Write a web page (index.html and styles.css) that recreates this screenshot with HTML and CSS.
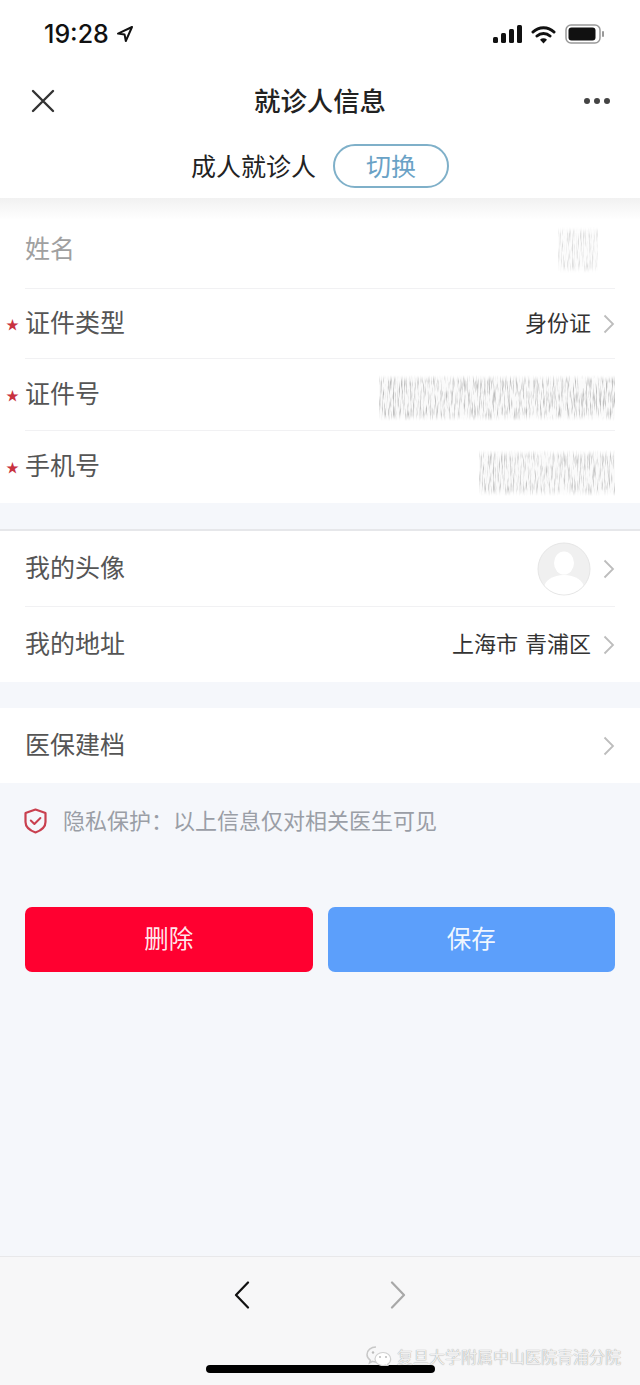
FILE: index.html
```html
<!DOCTYPE html>
<html lang="zh-CN">
<head>
  <meta charset="UTF-8">
  <meta name="viewport" content="width=device-width, initial-scale=1.0">
  <title>就诊人信息</title>
  <link rel="stylesheet" href="styles.css">
</head>
<body>
  <svg class="defs" width="0" height="0">
    <filter id="noise" x="0" y="0" width="1" height="1">
      <feTurbulence type="fractalNoise" baseFrequency="0.7 0.06" numOctaves="3" seed="7"/>
      <feColorMatrix values="0 0 0 0 .5  0 0 0 0 .5  0 0 0 0 .5  3 0 0 0 -1.350"/>
      <feComposite in2="SourceGraphic" operator="in"/>
      <feMerge><feMergeNode in="SourceGraphic"/><feMergeNode/></feMerge>
    </filter>
  </svg>
  <div class="page">
    <header class="top">
      <div class="status">
        <div class="status-time">
          <span>19:28</span>
          <svg width="18" height="18" viewBox="0 0 18 18"><path d="M16 2 2 8.600l6.600 1 1.200 6.400z" fill="none" stroke="#111" stroke-width="2" stroke-linejoin="round"/></svg>
        </div>
        <div class="status-icons">
          <svg width="29" height="20" viewBox="0 0 29 20"><rect x="0" y="13" width="5" height="6" rx="1.500" fill="#111"/><rect x="8" y="9" width="5" height="10" rx="1.500" fill="#111"/><rect x="16" y="5" width="5" height="14" rx="1.500" fill="#111"/><rect x="24" y="1" width="5" height="18" rx="1.500" fill="#111"/></svg>
          <svg width="25" height="19" viewBox="0 0 25 19"><path d="M2 7a15 15 0 0 1 21 0M6 11a9.500 9.500 0 0 1 13 0" fill="none" stroke="#111" stroke-width="3" stroke-linecap="round"/><path d="M12.500 18.500 9 14.700a5 5 0 0 1 7 0z" fill="#111"/></svg>
          <svg width="40" height="20" viewBox="0 0 40 20"><rect x="1" y="1" width="34" height="18" rx="5" fill="none" stroke="#999" stroke-width="1.500"/><rect x="3.500" y="3.500" width="27" height="13" rx="3" fill="#111"/><rect x="37" y="7" width="2" height="6" rx="1" fill="#999"/></svg>
        </div>
      </div>
      <nav class="nav">
        <svg class="nav-close" width="26" height="26" viewBox="0 0 26 26"><path d="M3 3l20 20M23 3 3 23" stroke="#333" stroke-width="2.400" stroke-linecap="round"/></svg>
        <h1 class="nav-title">就诊人信息</h1>
        <div class="nav-more"><i></i><i></i><i></i></div>
      </nav>
      <div class="patient-type">
        <span class="patient-text">成人就诊人</span>
        <button class="switch-button">切换</button>
      </div>
    </header>

    <section class="group group-first">
      <div class="row row-name">
        <span class="label label-off">姓名</span>
        <div class="mask mask-name"></div>
      </div>
      <div class="row row-type">
        <span class="star">★</span>
        <span class="label">证件类型</span>
        <span class="value">身份证</span>
        <svg class="chevron" width="12" height="20" viewBox="0 0 12 20"><path d="M1.500 1.500 10 10l-8.500 8.500" fill="none" stroke="#bdbdbd" stroke-width="1.800"/></svg>
      </div>
      <div class="row row-id">
        <span class="star">★</span>
        <span class="label">证件号</span>
        <div class="mask mask-id"></div>
      </div>
      <div class="row row-phone">
        <span class="star">★</span>
        <span class="label">手机号</span>
        <div class="mask mask-phone"></div>
      </div>
    </section>

    <section class="group group-second">
      <div class="row row-avatar">
        <span class="label">我的头像</span>
        <svg class="avatar" width="54" height="54" viewBox="0 0 54 54"><defs><clipPath id="avatar-clip"><circle cx="27" cy="27" r="25.500"/></clipPath></defs><circle cx="27" cy="27" r="26" fill="#f0f0f0" stroke="#e6e6e6"/><g clip-path="url(#avatar-clip)" fill="#fff"><ellipse cx="27" cy="21" rx="10" ry="11.500"/><ellipse cx="27" cy="46" rx="20" ry="13"/></g></svg>
        <svg class="chevron" width="12" height="20" viewBox="0 0 12 20"><path d="M1.500 1.500 10 10l-8.500 8.500" fill="none" stroke="#bdbdbd" stroke-width="1.800"/></svg>
      </div>
      <div class="row row-address">
        <span class="label">我的地址</span>
        <span class="value">上海市 青浦区</span>
        <svg class="chevron" width="12" height="20" viewBox="0 0 12 20"><path d="M1.500 1.500 10 10l-8.500 8.500" fill="none" stroke="#bdbdbd" stroke-width="1.800"/></svg>
      </div>
    </section>

    <section class="group group-third">
      <div class="row row-insurance">
        <span class="label">医保建档</span>
        <svg class="chevron chevron-end" width="12" height="20" viewBox="0 0 12 20"><path d="M1.500 1.500 10 10l-8.500 8.500" fill="none" stroke="#bdbdbd" stroke-width="1.800"/></svg>
      </div>
    </section>

    <div class="privacy">
      <svg width="23" height="26" viewBox="0 0 23 26"><path d="M11.500 1.500 21.500 5v9c0 5-4.500 8.500-10 10.500C6 22.500 1.500 19 1.500 14V5z" fill="none" stroke="#c9404f" stroke-width="2.200" stroke-linejoin="round"/><path d="M6.800 12.500l3.600 3.500 6-6" fill="none" stroke="#c9404f" stroke-width="2" stroke-linecap="round" stroke-linejoin="round"/></svg>
      <span class="privacy-text">隐私保护：以上信息仅对相关医生可见</span>
    </div>

    <div class="actions">
      <button class="action action-delete">删除</button>
      <button class="action action-save">保存</button>
    </div>

    <footer class="toolbar">
      <svg width="16" height="28" viewBox="0 0 16 28"><path d="M14 1.500 2 14l12 12.500" fill="none" stroke="#111" stroke-width="2.200" stroke-linecap="round" stroke-linejoin="round"/></svg>
      <svg width="16" height="28" viewBox="0 0 16 28"><path d="M2 1.500 14 14 2 26.500" fill="none" stroke="#a8a8a8" stroke-width="2.200" stroke-linecap="round" stroke-linejoin="round"/></svg>
      <div class="home-bar"></div>
      <div class="watermark">
        <svg width="26" height="20" viewBox="0 0 26 20"><path d="M10 1C5 1 1 4.300 1 8.500c0 2.400 1.300 4.400 3.400 5.800L3.500 17l3-1.600c1.100.3 2.300.5 3.500.5" fill="none" stroke="#c8c8c8" stroke-width="1.500"/><path d="M17 6.500c-4.400 0-8 2.900-8 6.500s3.600 6.500 8 6.500c1 0 1.900-.1 2.800-.4l2.500 1.300-.7-2.200c1.900-1.200 3.100-3 3.100-5.200 0-3.600-3.300-6.500-7.700-6.500z" fill="#fff" stroke="#d0d0d0" stroke-width="1.200"/><circle cx="7" cy="6.500" r="1.200" fill="#bbb"/><circle cx="14" cy="11" r="1" fill="#bbb"/><circle cx="20" cy="11" r="1" fill="#bbb"/></svg>
        <span>复旦大学附属中山医院青浦分院</span>
      </div>
    </footer>
  </div>
</body>
</html>
```

FILE: styles.css
```css
* {
  box-sizing: border-box;
}
body {
  margin: 0;
  font-family: "Noto Sans CJK SC", "Noto Sans", sans-serif;
  background: #f5f7fb;
}
.defs {
  position: absolute;
}
.page {
  position: relative;
  display: flex;
  flex-direction: column;
  height: 1385px;
  overflow: hidden;
}

/* top */
.top {
  height: 198px;
  background: #fff;
}
.status {
  display: flex;
  justify-content: space-between;
  align-items: center;
  height: 68px;
  padding: 0 35px 0 44px;
}
.status-time {
  display: flex;
  align-items: center;
  gap: 7px;
  font-family: Inter, sans-serif;
  font-size: 25px;
  font-weight: 500;
  color: #111;
}
.status-icons {
  display: flex;
  align-items: center;
  gap: 9px;
}
.nav {
  display: flex;
  justify-content: space-between;
  align-items: center;
  height: 66px;
  padding: 0 30px;
}
.nav-title {
  margin: 0 0 4px;
  font-size: 26.400px;
  font-weight: 500;
  color: #222;
}
.nav-more {
  display: flex;
  gap: 4px;
}
.nav-more i {
  width: 6px;
  height: 6px;
  border-radius: 50%;
  background: #444;
}
.patient-type {
  display: flex;
  justify-content: center;
  align-items: center;
  gap: 17px;
  height: 62px;
  padding-top: 2px;
  font-size: 25px;
  color: #222;
}
.patient-text {
  margin-bottom: 2px;
}
.switch-button {
  width: 116px;
  height: 44px;
  padding: 0 0 2px;
  border: 2px solid #7fb0c9;
  border-radius: 22px;
  background: #fff;
  font-family: inherit;
  font-size: 25px;
  color: #6aa2c6;
}

/* rows */
.group {
  background: #fff;
}
.group-first {
  background: linear-gradient(#f1f1f1, #fff 22px);
}
.group-second {
  margin-top: 26px;
  border-top: 2px solid #e6e7ea;
}
.group-third {
  margin-top: 26px;
}
.row {
  display: flex;
  align-items: center;
  margin: 0 25px;
  border-bottom: 1px solid #f1f1f3;
}
.row-name {
  height: 91px;
  padding-top: 14px;
}
.row-type {
  height: 70px;
}
.row-id {
  height: 72px;
}
.row-phone {
  height: 72px;
  border-bottom: 0;
}
.row-avatar {
  height: 76px;
}
.row-address {
  height: 75px;
  border-bottom: 0;
}
.row-insurance {
  height: 75px;
  border-bottom: 0;
}
.star {
  width: 19px;
  margin-left: -19px;
  font-size: 13px;
  line-height: 24px;
  color: #c8323f;
}
.label {
  margin-bottom: 6px;
  font-size: 25px;
  color: #555;
}
.label-off {
  color: #a0a0a0;
}
.value {
  margin-left: auto;
  margin-bottom: 6px;
  font-size: 22px;
  word-spacing: 2px;
  color: #333;
}
.chevron {
  margin-left: 12px;
  flex: none;
}
.chevron-end {
  margin-left: auto;
}
.avatar {
  margin-left: auto;
}

/* blurred values */
.mask {
  margin-left: auto;
  background: #fafafa;
  filter: url(#noise) blur(0.5px);
  -webkit-mask-image: linear-gradient(transparent, #000 14%, #000 86%, transparent);
  mask-image: linear-gradient(transparent, #000 14%, #000 86%, transparent);
}
.mask-name {
  width: 40px;
  height: 46px;
  margin-right: 17px;
  opacity: 0.5;
}
.mask-id {
  width: 236px;
  height: 46px;
  margin-top: 6px;
}
.mask-phone {
  width: 136px;
  height: 46px;
  margin-top: 12px;
  opacity: 0.85;
}

/* privacy */
.privacy {
  display: flex;
  align-items: center;
  gap: 16px;
  height: 76px;
  padding-left: 24px;
  font-size: 22px;
  color: #9a9ea6;
}
.privacy-text {
  margin-bottom: 5px;
}
.actions {
  display: flex;
  gap: 15px;
  margin-top: 48px;
  padding: 0 25px;
}
.action {
  flex: 1;
  height: 65px;
  padding: 0 0 4px;
  border: none;
  border-radius: 7px;
  font-family: inherit;
  font-size: 24.500px;
  color: rgba(255, 255, 255, 0.92);
}
.action-delete {
  background: #ff0030;
}
.action-save {
  background: #5c9ffb;
}

/* bottom */
.toolbar {
  position: relative;
  display: flex;
  justify-content: center;
  gap: 140px;
  height: 129px;
  margin-top: auto;
  padding-top: 24px;
  border-top: 1px solid #e8e8ea;
  background: #f7f7f8;
}
.home-bar {
  position: absolute;
  left: 206px;
  bottom: 12px;
  width: 229px;
  height: 8px;
  border-radius: 4px;
  background: #000;
}
.watermark {
  position: absolute;
  left: 366px;
  bottom: 17px;
  display: flex;
  align-items: center;
  gap: 5px;
  font-size: 16px;
  color: #f0f0f0;
  text-shadow: 0 0 1px #888;
}
```
